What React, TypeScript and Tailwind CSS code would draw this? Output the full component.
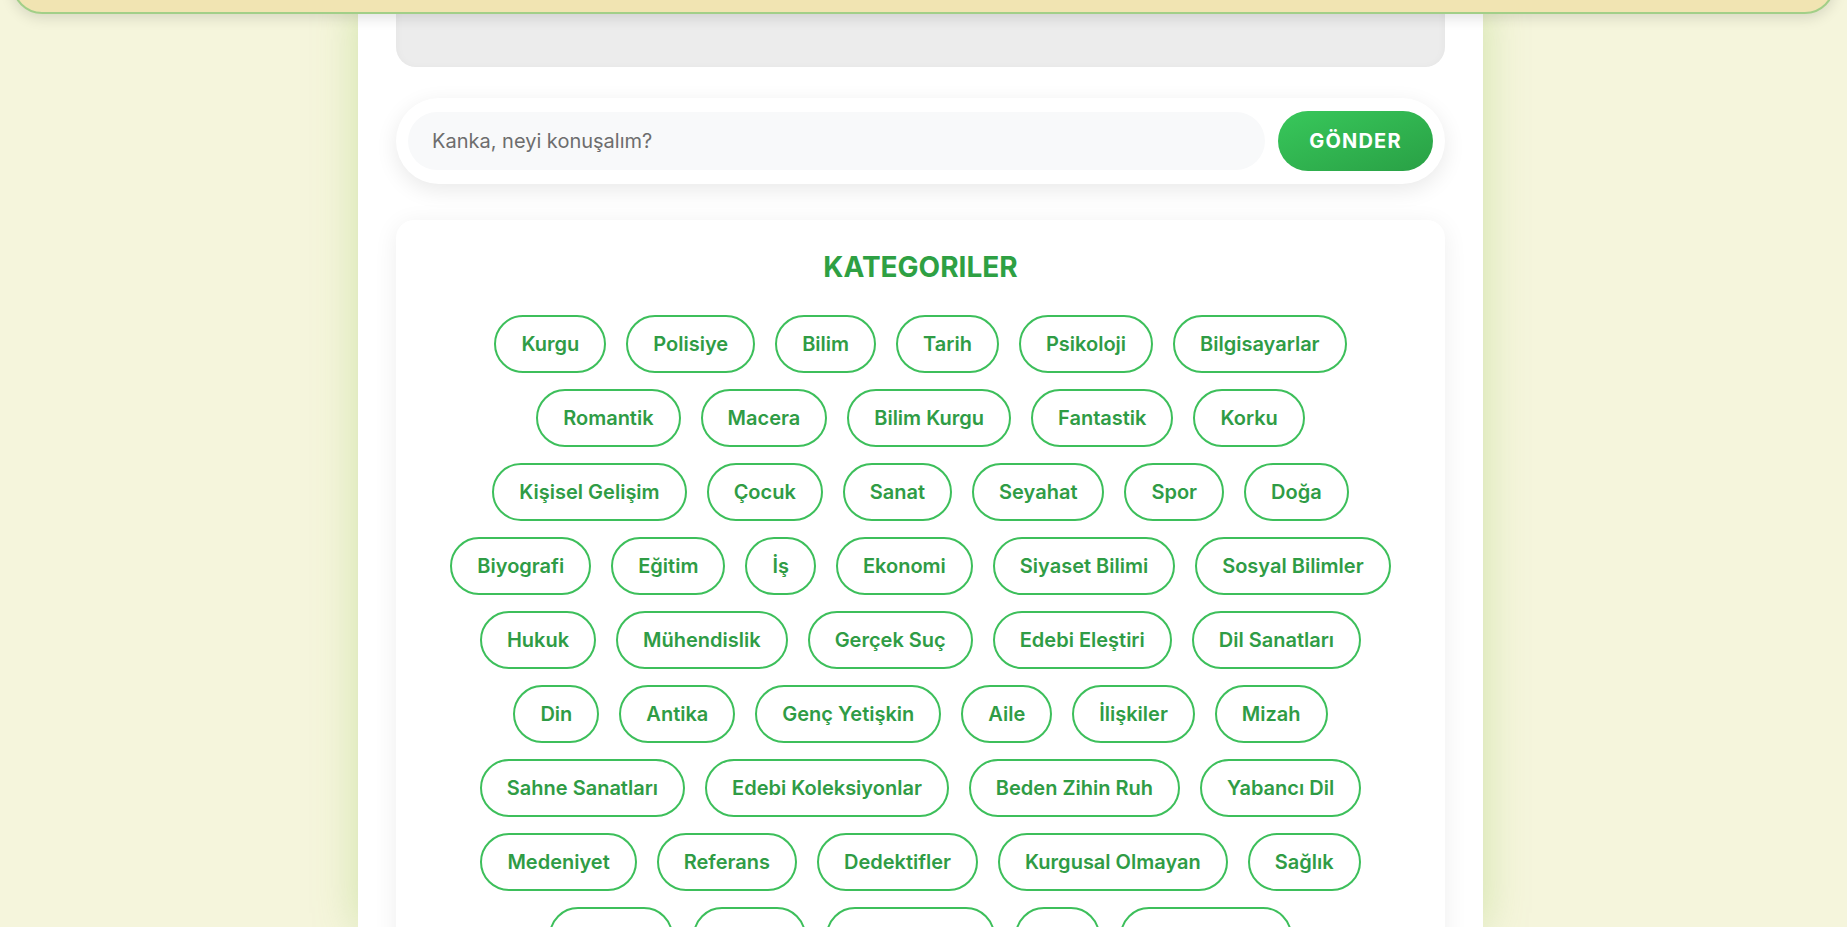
import React from 'react'

const rows: string[][] = [
  ['Kurgu', 'Polisiye', 'Bilim', 'Tarih', 'Psikoloji', 'Bilgisayarlar'],
  ['Romantik', 'Macera', 'Bilim Kurgu', 'Fantastik', 'Korku'],
  ['Kişisel Gelişim', 'Çocuk', 'Sanat', 'Seyahat', 'Spor', 'Doğa'],
  ['Biyografi', 'Eğitim', 'İş', 'Ekonomi', 'Siyaset Bilimi', 'Sosyal Bilimler'],
  ['Hukuk', 'Mühendislik', 'Gerçek Suç', 'Edebi Eleştiri', 'Dil Sanatları'],
  ['Din', 'Antika', 'Genç Yetişkin', 'Aile', 'İlişkiler', 'Mizah'],
  ['Sahne Sanatları', 'Edebi Koleksiyonlar', 'Beden Zihin Ruh', 'Yabancı Dil'],
  ['Medeniyet', 'Referans', 'Dedektifler', 'Kurgusal Olmayan', 'Sağlık'],
  ['Felsefe', 'Müzik', 'Dil Sanatları', 'Tıp', 'Ev ve Bahçe'],
]

function Chip({ label }: { label: string }) {
  return (
    <button className="flex h-[58px] items-center rounded-full border-2 border-[#3dbf5b] bg-white px-[25px] text-[20px] font-semibold text-[#2f9c45]">
      {label}
    </button>
  )
}

export default function App() {
  return (
    <div className="relative h-screen overflow-hidden bg-[#f5f5dc] font-['Inter',sans-serif]">
      {/* top bar, mostly scrolled away */}
      <header className="fixed left-3 right-3 top-[-70px] z-10 h-[84px] rounded-[30px] border-2 border-[#a2cf88] bg-[#f1e4b2] shadow-[0_4px_14px_rgba(0,0,0,0.12)]" />

      <main className="mx-auto h-full w-[1125px] -translate-x-[3px] bg-white px-[38px] shadow-[0_0_40px_rgba(139,195,74,0.35)]">
        {/* chat area */}
        <div className="h-[67px] rounded-b-[20px] bg-[#ececec] shadow-[inset_0_2px_10px_rgba(0,0,0,0.04)]" />

        {/* input */}
        <div className="mt-[31px] flex items-center gap-[13px] rounded-full bg-white px-[12px] py-[13px] shadow-[0_6px_22px_rgba(0,0,0,0.09)]">
          <input
            placeholder="Kanka, neyi konuşalım?"
            className="h-[58px] flex-1 rounded-full bg-[#f8f9fa] px-[24px] text-[20px] text-[#333] outline-none placeholder:text-[#6d6d6d]"
          />
          <button className="h-[60px] w-[155px] rounded-full bg-linear-to-br from-[#38c85b] to-[#29a045] text-[20px] font-bold tracking-[1.2px] text-white">
            GÖNDER
          </button>
        </div>

        {/* categories */}
        <section className="mt-[36px] rounded-[18px] bg-white pb-[40px] pt-[30px] shadow-[0_4px_25px_rgba(0,0,0,0.07)]">
          <h2 className="text-center text-[28px] font-bold leading-[34px] text-[#2ea043]">KATEGORILER</h2>
          <div className="mt-[31px] flex flex-col gap-[16px]">
            {rows.map((row, i) => (
              <div key={i} className="flex justify-center gap-[20px]">
                {row.map((c) => (
                  <Chip key={c} label={c} />
                ))}
              </div>
            ))}
          </div>
        </section>
      </main>
    </div>
  )
}
